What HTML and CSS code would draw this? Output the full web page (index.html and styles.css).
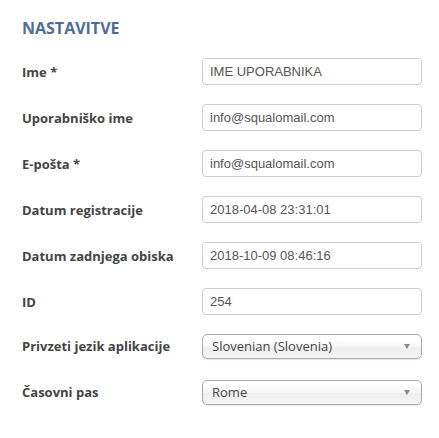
FILE: index.html
```html
<!DOCTYPE html>
<html lang="sl">
<head>
<meta charset="utf-8">
<title>Nastavitve</title>
<link rel="stylesheet" href="styles.css">
</head>
<body>
<div class="panel">
  <h2 class="title">NASTAVITVE</h2>
  <div class="form">
    <div class="row">
      <label class="label">Ime *</label>
      <div class="input">IME UPORABNIKA</div>
    </div>
    <div class="row">
      <label class="label">Uporabniško ime</label>
      <div class="input">info@squalomail.com</div>
    </div>
    <div class="row">
      <label class="label">E-pošta *</label>
      <div class="input">info@squalomail.com</div>
    </div>
    <div class="row">
      <label class="label">Datum registracije</label>
      <div class="input">2018-04-08 23:31:01</div>
    </div>
    <div class="row">
      <label class="label">Datum zadnjega obiska</label>
      <div class="input">2018-10-09 08:46:16</div>
    </div>
    <div class="row">
      <label class="label">ID</label>
      <div class="input">254</div>
    </div>
    <div class="row row-select">
      <label class="label">Privzeti jezik aplikacije</label>
      <div class="select"><span>Slovenian (Slovenia)</span><i class="arrow"></i></div>
    </div>
    <div class="row row-select">
      <label class="label">Časovni pas</label>
      <div class="select"><span>Rome</span><i class="arrow"></i></div>
    </div>
  </div>
</div>
</body>
</html>
```
FILE: styles.css
```css
html, body {
  margin: 0;
  padding: 0;
  background: #fff;
}
.panel {
  padding: 14px 0 0 22px;
  font-family: "Open Sans", "Liberation Sans", sans-serif;
}
.title {
  margin: 0 0 16px 0;
  font-size: 16px;
  font-weight: 700;
  line-height: 28px;
  color: #4f6b9e;
}
.form {
  display: flex;
  flex-direction: column;
  gap: 19px;
}
.row {
  display: flex;
  align-items: center;
  height: 27px;
}
.row-select {
  align-items: flex-start;
}
.label {
  width: 180px;
  font-size: 13px;
  font-weight: 700;
  color: #444;
}
.row-select .label {
  line-height: 25px;
}
.input {
  box-sizing: border-box;
  width: 220px;
  height: 27px;
  border: 1px solid #cccccc;
  border-radius: 4px;
  padding: 0 7px;
  font-family: "Liberation Sans", Arial, sans-serif;
  font-size: 13px;
  line-height: 25px;
  color: #555;
}
.select {
  box-sizing: border-box;
  width: 220px;
  height: 25px;
  border: 1px solid #aaaaaa;
  border-radius: 5px;
  padding: 0 0 0 9px;
  display: flex;
  align-items: center;
  justify-content: space-between;
  background: linear-gradient(#ffffff 20%, #f6f6f6 50%, #eeeeee 52%, #f4f4f4 100%);
  box-shadow: 0 1px 1px rgba(0,0,0,0.1);
  font-size: 13px;
  color: #444;
  line-height: 23px;
}
.arrow {
  width: 0;
  height: 0;
  margin-right: 11px;
  border-left: 3.5px solid transparent;
  border-right: 3.5px solid transparent;
  border-top: 5px solid #888;
}
```
